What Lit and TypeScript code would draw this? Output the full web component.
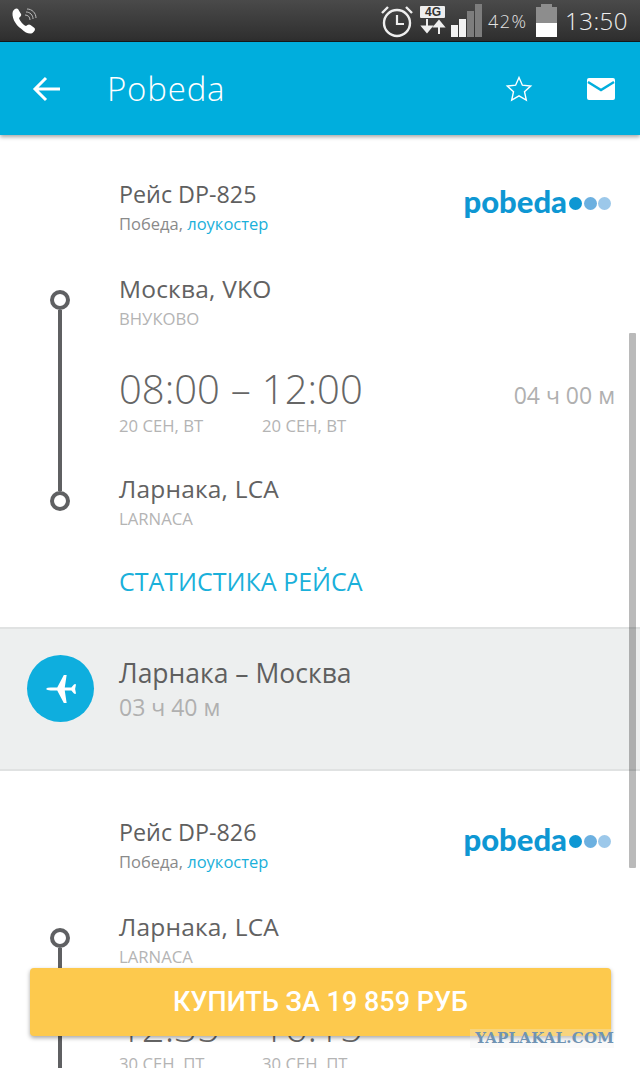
import { LitElement, html, css } from "lit";
import { customElement } from "lit/decorators.js";

const logo = html`<div class="logo"><span class="logo-word">pobeda</span><i class="d d1"></i><i class="d d2"></i><i class="d d3"></i></div>`;

@customElement("app-root")
export class AppRoot extends LitElement {
  static styles = css`
    :host { display: block; position: relative; width: 640px; height: 1068px; overflow: hidden; background: #fff; font-family: "Open Sans", sans-serif; color: #5f5f5f; }
    .status { height: 41px; background: linear-gradient(#4a4a4a, #2e2e2e); border-bottom: 1px solid #15191c; display: flex; align-items: center; padding: 0 12px 0 10px; color: #eee; }
    .status .grow { flex: 1; }
    .status svg { display: block; }
    .pct { font-size: 18px; font-weight: 300; margin: 0 8px 0 5px; width: 40px; color: #e4e4e4; letter-spacing: 1.500px; white-space: nowrap; }
    .clock { font-size: 24px; margin-left: 8px; letter-spacing: 0.5px; color: #f0f0f0; font-weight: 300; }
    .net { display: flex; flex-direction: column; align-items: center; margin: 0 5px 0 6px; }
    .net b { display: block; background: #eee; color: #333; font: bold 12px/12px "Liberation Sans", sans-serif; width: 25px; text-align: center; border-radius: 1px; }
    .bar { height: 93px; background: #00aedd; display: flex; align-items: center; color: #fff; box-shadow: 0 2px 4px rgba(0,0,0,.35); position: relative; z-index: 1; }
    .back { margin-left: 32px; width: 30px; }
    .title { margin-left: 45px; font-size: 33px; font-weight: 300; flex: 1; letter-spacing: 0.8px; }
    .star { margin-right: 54px; }
    .mail { margin-right: 25px; }
    .flight { padding-top: 43px; }
    .flight.second { padding-top: 45px; }
    .head { display: flex; justify-content: space-between; padding: 0 29px 0 119px; height: 64px; }
    .fno { font-size: 23.300px; line-height: 33px; }
    .sub { font-size: 16.500px; line-height: 24px; color: #8a8a8a; margin-top: 1px; }
    .sub a { color: #1ab0da; }
    .logo { display: flex; align-items: center; height: 38px; margin-top: 4px; }
    .logo-word { font: 900 31px/38px "Lato", sans-serif; color: #0e97d3; }
    .d { width: 13px; height: 13px; border-radius: 50%; display: block; margin-left: 1.500px; margin-top: 4px; }
    .d1 { background: #0e97d3; margin-left: 2px; } .d2 { background: #6cb0e0; } .d3 { background: #9cc8ea; }
    .leg { display: flex; margin-top: 30px; }
    .rail { width: 119px; flex: none; display: flex; flex-direction: column; align-items: center; padding: 18px 0 19px; box-sizing: border-box; }
    .c { width: 20px; height: 20px; box-sizing: border-box; border: 4px solid #5f6062; border-radius: 50%; flex: none; background: #fff; }
    .l { width: 4px; background: #5f6062; flex: 1; }
    .body { flex: 1; padding-right: 25px; }
    .city { font-size: 24.500px; line-height: 33px; color: #626262; letter-spacing: .2px; }
    .cap { font-size: 16.700px; line-height: 22px; color: #b4b4b4; margin-top: 3px; }
    .times { display: flex; align-items: baseline; margin-top: 37px; height: 50px; font-weight: 300; font-size: 40px; line-height: 44px; color: #666; }
    .dash { margin: 0 11px; }
    .dur { margin-left: auto; font-size: 23px; font-weight: 400; color: #b0b0b0; }
    .dates { display: flex; font-size: 16.700px; line-height: 22px; color: #b4b4b4; margin-top: -2px; margin-bottom: 35px; }
    .dates span { width: 143px; }
    .stats { margin: 33px 0 0 119px; height: 64px; font-size: 25px; line-height: 36px; color: #1ab0da; }
    .band { height: 144px; background: #edefef; border-top: 2px solid #e0e2e2; border-bottom: 2px solid #e0e2e2; display: flex; align-items: flex-start; padding: 0 0 0 27px; box-sizing: border-box; }
    .plane { width: 67px; height: 67px; margin-top: 26px; border-radius: 50%; background: #0eaede; display: flex; align-items: center; justify-content: center; flex: none; }
    .band-t { margin: 25px 0 0 25px; }
    .band-t div:first-child { font-size: 26.500px; line-height: 38px; color: #5f5f5f; }
    .band-t div:last-child { font-size: 23px; line-height: 30px; color: #b0b0b0; }
    .scrollbar { position: absolute; left: 629px; top: 333px; width: 7px; height: 535px; background: rgba(0,0,0,.27); border-radius: 1px; }
    .buy { position: absolute; left: 30px; top: 968px; width: 581px; height: 68px; border-radius: 4px; background: #fdc94d; color: #fff; font-family: Roboto, sans-serif; font-size: 27px; font-weight: 500; display: flex; align-items: center; justify-content: center; box-shadow: 0 2px 4px rgba(0,0,0,.35); }
    .wm { position: absolute; left: 470px; top: 1029px; width: 144px; height: 19px; background: rgba(240,240,240,.3); text-align: right; font: bold 15px/19px "DejaVu Serif", serif; color: #6f93b3; letter-spacing: .2px; }
  `;

  leg(from: string, fromCap: string, t1: string, t2: string, d1: string, d2: string, dur: string, to: string, toCap: string) {
    return html`<div class="leg">
      <div class="rail"><div class="c"></div><div class="l"></div><div class="c"></div></div>
      <div class="body">
        <div class="city">${from}</div>
        <div class="cap">${fromCap}</div>
        <div class="times"><span>${t1}</span><span class="dash">–</span><span>${t2}</span><span class="dur">${dur}</span></div>
        <div class="dates"><span>${d1}</span><span>${d2}</span></div>
        <div class="city">${to}</div>
        <div class="cap">${toCap}</div>
      </div>
    </div>`;
  }

  render() {
    return html`
      <div class="status">
        <svg width="30" height="30" viewBox="0 0 30 30"><path d="M3 5c2-3 4-3 5-2l3 5c.5 1 0 2-1 3l-1 1c1 3 4 7 7 8l1.500-1c1-.8 2-.8 3 0l4 3c1 1 .5 3-2 5-3 1.500-7 0-11-4C5 19 1 10 3 5z" fill="#fff"/><path d="M15 9c3 0 5 2 5 5M16 6c4 0 7 3 7 7M17 3c5 0 9 4 9 9" fill="none" stroke="#bbb" stroke-width="1"/></svg>
        <div class="grow"></div>
        <svg width="34" height="34" viewBox="0 0 34 34"><circle cx="17" cy="19" r="13" fill="none" stroke="#eee" stroke-width="2.400"/><path d="M17 11v9h7" fill="none" stroke="#eee" stroke-width="2.200"/><path d="M2 9l6-6M32 9l-6-6" stroke="#eee" stroke-width="2.400"/></svg>
        <div class="net"><b>4G</b><svg width="26" height="17" viewBox="0 0 26 17"><path d="M7 1v10M2.500 8.500L7 14l4.500-5.500zM19 16V6M14.500 8.500L19 3l4.500 5.500z" fill="#eee" stroke="#eee" stroke-width="2"/></svg></div>
        <svg width="32" height="33" viewBox="0 0 32 33"><rect x="0" y="21" width="7" height="12" fill="#f2f2f2"/><rect x="8" y="15" width="7" height="18" fill="#f2f2f2"/><rect x="16" y="7" width="7" height="26" fill="#7d7d7d"/><rect x="24" y="0" width="7" height="33" fill="#7d7d7d"/></svg>
        <span class="pct">42%</span>
        <svg width="21" height="33" viewBox="0 0 21 33"><rect x="5" y="0" width="11" height="3" fill="#8d8d8d"/><rect x="0" y="3" width="21" height="16" fill="#8d8d8d"/><rect x="0" y="19" width="21" height="14" fill="#fff"/></svg>
        <span class="clock">13:50</span>
      </div>
      <div class="bar">
        <svg class="back" width="30" height="30" viewBox="0 0 30 30"><path d="M28 15H3M14 4L3 15l11 11" fill="none" stroke="#fff" stroke-width="3"/></svg>
        <div class="title">Pobeda</div>
        <svg class="star" width="28" height="28" viewBox="0 0 28 28"><path d="M14 2.500l3.400 7.700 8.300.9-6.200 5.600 1.800 8.300L14 20.800 6.700 25l1.800-8.300-6.200-5.600 8.300-.9z" fill="none" stroke="#fff" stroke-width="1.400"/></svg>
        <svg class="mail" width="28" height="22" viewBox="0 0 28 22"><rect width="28" height="22" rx="2" fill="#fff"/><path d="M1 4l13 8 13-8" fill="none" stroke="#00aedd" stroke-width="2.500"/></svg>
      </div>
      <section class="flight">
        <div class="head"><div><div class="fno">Рейс DP-825</div><div class="sub">Победа, <a>лоукостер</a></div></div>${logo}</div>
        ${this.leg("Москва, VKO", "ВНУКОВО", "08:00", "12:00", "20 СЕН, ВТ", "20 СЕН, ВТ", "04 ч 00 м", "Ларнака, LCA", "LARNACA")}
        <div class="stats">СТАТИСТИКА РЕЙСА</div>
      </section>
      <div class="band">
        <div class="plane"><svg width="32" height="32" viewBox="0 0 34 34"><path d="M1 17Q2 15.500 6 15.500H13L20 2H23L21 15.500H28L31 12H33L32 17L33 22H31L28 18.500H21L23 32H20L13 18.500H6Q2 18.500 1 17Z" fill="#fff"/></svg></div>
        <div class="band-t"><div>Ларнака – Москва</div><div>03 ч 40 м</div></div>
      </div>
      <section class="flight second">
        <div class="head"><div><div class="fno">Рейс DP-826</div><div class="sub">Победа, <a>лоукостер</a></div></div>${logo}</div>
        ${this.leg("Ларнака, LCA", "LARNACA", "12:35", "16:15", "30 СЕН, ПТ", "30 СЕН, ПТ", "", "Москва, VKO", "ВНУКОВО")}
      </section>
      <div class="scrollbar"></div>
      <div class="buy">КУПИТЬ ЗА 19 859 РУБ</div>
      <div class="wm">YAPLAKAL.COM</div>
    `;
  }
}
